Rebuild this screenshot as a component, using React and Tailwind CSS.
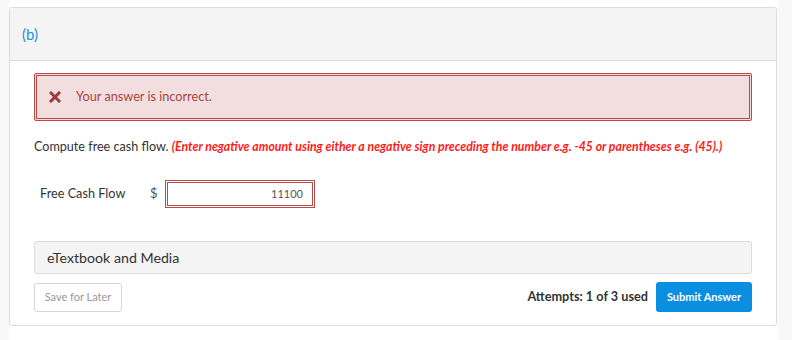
export default function App() {
  return (
    <div className="flex h-[340px] w-[792px] bg-white font-['Lato','Liberation_Sans',sans-serif] text-[#333]">
      <div className="w-[9px] bg-[#f8f8f8]" />
      <div className="w-[769px] pt-[7px]">
        <div className="w-[768px] rounded-[3px] border border-[#dcdcdc] bg-white">
          <div className="flex h-[53px] items-center border-b border-[#dcdcdc] bg-[#f4f4f4] px-[12px] pt-[1px]">
            <span className="text-[15px] text-[#1a93e0]">(b)</span>
          </div>

          <div className="px-[24px] pb-[13px] pt-[12px]">
            <div className="flex h-[48px] items-center rounded-[2px] border-[3px] border-double border-[#b94a48] bg-[#f2dede] pl-[12px]">
              <svg width="12" height="12" viewBox="0 0 12 12" className="mr-[15px]">
                <path d="M2 2 L10 10 M10 2 L2 10" stroke="#9c3b39" strokeWidth="3" strokeLinecap="square" />
              </svg>
              <span className="text-[12.7px] text-[#a94442]">Your answer is incorrect.</span>
            </div>

            <p className="mt-[17px] text-[12.6px] leading-[18px] text-[#333]">
              Compute free cash flow.{" "}
              <span className="text-[12.3px] font-bold italic text-[#ff1a1a]">
                (Enter negative amount using either a negative sign preceding the number e.g. -45 or parentheses e.g. (45).)
              </span>
            </p>

            <div className="mt-[24px] flex items-center">
              <span className="ml-[6px] w-[110px] text-[12.7px] text-[#333]">Free Cash Flow</span>
              <span className="w-[15px] text-[13px] text-[#555]">$</span>
              <div className="flex h-[28px] w-[150px] items-center justify-end border-[3px] border-double border-[#b94a48] bg-white pr-[9px] text-[11px] text-[#555]">
                11100
              </div>
            </div>

            <div className="mt-[33px] flex h-[33px] items-center rounded-[3px] border border-[#dcdcdc] bg-[#f4f4f4] px-[12px] text-[14.2px] text-[#333]">
              eTextbook and Media
            </div>

            <div className="mt-[8px] flex items-center">
              <button className="h-[29px] w-[88px] rounded-[3px] border border-[#d6d6d6] bg-white text-[11px] text-[#999]">
                Save for Later
              </button>
              <div className="ml-auto flex items-center">
                <span className="mr-[8px] text-[12.7px] font-bold text-[#333]">Attempts: 1 of 3 used</span>
                <button className="h-[30px] w-[96px] rounded-[3px] bg-[#0a8ee0] text-[11px] font-bold text-white">
                  Submit Answer
                </button>
              </div>
            </div>
          </div>
        </div>
      </div>
      <div className="flex-1 bg-[#f8f8f8]" />
    </div>
  );
}
